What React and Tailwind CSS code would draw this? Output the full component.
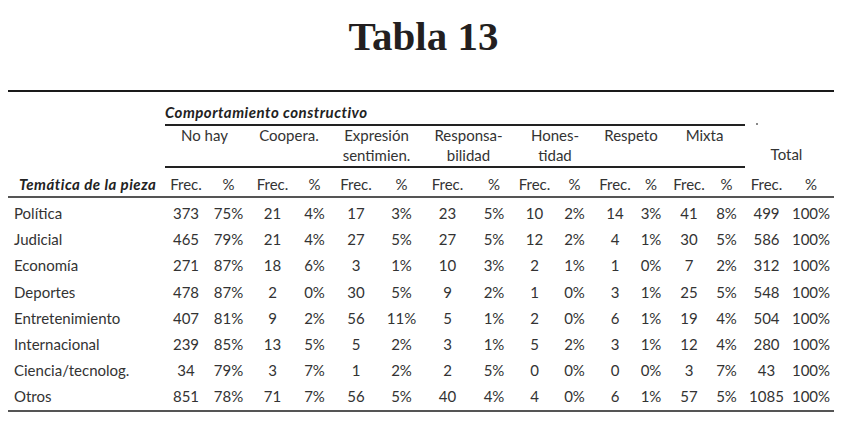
import React from 'react';

const cols =
  'grid grid-cols-[157px_42px_43px_45px_39px_44px_47px_45px_48px_33px_47px_34px_38px_38px_37px_43px_46px]';

const groups = [
  ['No hay', ''],
  ['Coopera.', ''],
  ['Expresión', 'sentimien.'],
  ['Responsa-', 'bilidad'],
  ['Hones-', 'tidad'],
  ['Respeto', ''],
  ['Mixta', ''],
];

const rows = [
  ['Política', '373', '75%', '21', '4%', '17', '3%', '23', '5%', '10', '2%', '14', '3%', '41', '8%', '499', '100%'],
  ['Judicial', '465', '79%', '21', '4%', '27', '5%', '27', '5%', '12', '2%', '4', '1%', '30', '5%', '586', '100%'],
  ['Economía', '271', '87%', '18', '6%', '3', '1%', '10', '3%', '2', '1%', '1', '0%', '7', '2%', '312', '100%'],
  ['Deportes', '478', '87%', '2', '0%', '30', '5%', '9', '2%', '1', '0%', '3', '1%', '25', '5%', '548', '100%'],
  ['Entretenimiento', '407', '81%', '9', '2%', '56', '11%', '5', '1%', '2', '0%', '6', '1%', '19', '4%', '504', '100%'],
  ['Internacional', '239', '85%', '13', '5%', '5', '2%', '3', '1%', '5', '2%', '3', '1%', '12', '4%', '280', '100%'],
  ['Ciencia/tecnolog.', '34', '79%', '3', '7%', '1', '2%', '2', '5%', '0', '0%', '0', '0%', '3', '7%', '43', '100%'],
  ['Otros', '851', '78%', '71', '7%', '56', '5%', '40', '4%', '4', '0%', '6', '1%', '57', '5%', '1085', '100%'],
];

export default function App() {
  return (
    <div className="w-[847px] h-[429px] bg-white text-[#333] font-['Lato',sans-serif] text-[15px] leading-[18px] overflow-hidden">
      {/* title */}
      <div className="h-[90px] pt-[13px] text-center font-['Liberation_Serif',serif] font-bold text-[41px] leading-[46px] text-[#231f20]">
        Tabla 13
      </div>

      <div className="ml-[8px] w-[826px] border-t-2 border-[#1a1a1a]">
        {/* group title */}
        <div className={`${cols} h-[34px]`}>
          <div />
          <div className="col-span-14 flex items-end pb-[3px] border-b-2 border-[#222] font-bold italic tracking-[0.5px] text-[#222]">
            Comportamiento constructivo
          </div>
          <div className="col-span-2 flex items-end pl-[11px] pb-[1px]">
            <span className="w-[2px] h-[2px] bg-[#888]" />
          </div>
        </div>

        {/* categories */}
        <div className={`${cols} h-[42px]`}>
          <div />
          {groups.map(([a, b]) => (
            <div key={a} className="col-span-2 border-b-2 border-[#222] text-center leading-[20px] pr-[6px] -mt-[1px]">
              <div>{a}</div>
              <div>{b}</div>
            </div>
          ))}
          <div className="col-span-2 flex items-end justify-center pb-[4px] pr-[6px] leading-[20px]">Total</div>
        </div>

        {/* sub header */}
        <div className={`${cols} h-[30px] border-b-2 border-[#555]`}>
          <div className="flex items-end pl-[11px] pb-[3px] font-bold italic tracking-[0.5px] text-[#222]">
            Temática de la pieza
          </div>
          {Array.from({ length: 8 }).flatMap((_, i) => [
            <div key={`f${i}`} className="flex items-end justify-center pb-[3px]">Frec.</div>,
            <div key={`p${i}`} className="flex items-end justify-center pb-[3px]">%</div>,
          ])}
        </div>

        {/* data */}
        <div className="pt-[2px] border-b-2 border-[#555]">
          {rows.map((r) => (
            <div key={r[0]} className={`${cols} h-[26.2px] items-center`}>
              {r.map((c, i) => (
                <div key={i} className={i === 0 ? 'pl-[6px]' : 'text-center'}>
                  {c}
                </div>
              ))}
            </div>
          ))}
        </div>
      </div>
    </div>
  );
}
